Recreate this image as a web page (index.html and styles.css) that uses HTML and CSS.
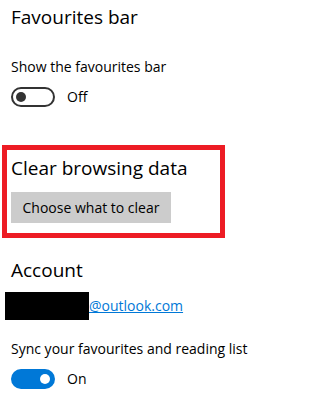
FILE: index.html
```html
<!DOCTYPE html>
<html>
<head>
<meta charset="utf-8">
<link rel="stylesheet" href="styles.css">
</head>
<body>
<div class="page">
  <section class="group">
    <h2 class="heading first">Favourites bar</h2>
    <div class="label">Show the favourites bar</div>
    <div class="toggle-row">
      <span class="toggle off"><span class="knob"></span></span>
      <span class="state">Off</span>
    </div>
  </section>

  <section class="clear-box">
    <h2 class="heading">Clear browsing data</h2>
    <button class="btn">Choose what to clear</button>
  </section>

  <section class="group account-group">
    <h2 class="heading">Account</h2>
    <div class="account">
      <span class="redact"></span><a class="link" href="#">@outlook.com</a>
    </div>
    <div class="label sync">Sync your favourites and reading list</div>
    <div class="toggle-row">
      <span class="toggle on"><span class="knob"></span></span>
      <span class="state">On</span>
    </div>
  </section>
</div>
</body>
</html>
```

FILE: styles.css
```css
html, body {
  margin: 0;
  padding: 0;
  background: #fff;
}
body {
  font-family: "Segoe UI", "Open Sans", sans-serif;
  color: #000;
  width: 328px;
  height: 395px;
  overflow: hidden;
}
.page {
  padding-left: 2px;
}
.group {
  padding-left: 9px;
}
.heading {
  margin: 0;
  font-size: 19px;
  font-weight: 400;
  line-height: 28px;
}
.heading.first {
  margin-top: 3px;
}
.label {
  font-size: 14px;
  line-height: 20px;
  margin-top: 26px;
}
.toggle-row {
  display: flex;
  align-items: center;
  margin-top: 10px;
  height: 20px;
}
.toggle {
  box-sizing: border-box;
  width: 44px;
  height: 20px;
  border-radius: 10px;
  position: relative;
  flex: none;
}
.toggle.off {
  border: 2px solid #333;
}
.toggle.on {
  background: #0078d7;
}
.knob {
  position: absolute;
  width: 10px;
  height: 10px;
  border-radius: 50%;
  top: 5px;
}
.toggle.off .knob {
  background: #333;
  top: 3px;
  left: 3px;
}
.toggle.on .knob {
  background: #fff;
  right: 5px;
}
.state {
  font-size: 14px;
  line-height: 20px;
  margin-left: 12px;
}
.clear-box {
  margin-top: 38px;
  width: 223px;
  box-sizing: border-box;
  border: 5px solid #ed1c24;
  padding: 4px 0 10px 4px;
}
.clear-box .heading {
  margin: 0;
}
.btn {
  display: block;
  margin-top: 10px;
  height: 31px;
  width: 160px;
  padding: 0;
  border: none;
  background: #ccc;
  font-family: inherit;
  font-size: 14px;
  color: #000;
  text-align: center;
}
.account-group .heading {
  margin-top: 18px;
}
.account {
  display: flex;
  align-items: flex-start;
  margin-top: 8px;
  margin-left: -6px;
}
.redact {
  display: block;
  width: 84px;
  height: 28px;
  background: #000;
}
.link {
  font-size: 14px;
  line-height: 20px;
  margin-top: 4px;
  color: #0078d7;
  text-decoration: underline;
}
.label.sync {
  margin-top: 19px;
}
```
